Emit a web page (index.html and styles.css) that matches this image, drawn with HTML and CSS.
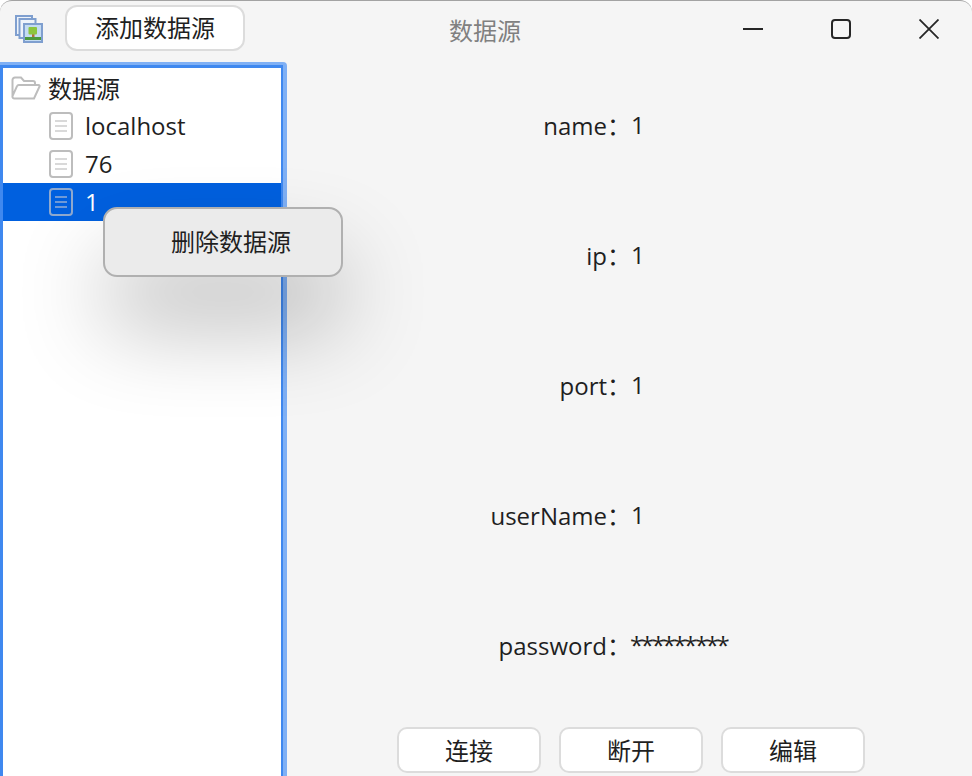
FILE: index.html
```html
<!DOCTYPE html>
<html>
<head>
    <title>数据源</title>
    <link rel="stylesheet" href="styles.css">
</head>
<body>

<div class="window">
    <div class="titlebar">
        <div class="title-left">
            <svg class="app-icon" width="28" height="28" viewBox="0 0 28 28">
                <rect x="1" y="1" width="16" height="19" fill="#eef3fa" stroke="#7f9fcf" stroke-width="2"/>
                <rect x="4.500" y="4" width="16" height="19" fill="#eef3fa" stroke="#7f9fcf" stroke-width="2"/>
                <rect x="9" y="9" width="18" height="18" fill="#c4dcf2" stroke="#7f9fcf" stroke-width="2"/>
                <rect x="10" y="22" width="16" height="3" fill="#4c9a3c"/>
                <rect x="17" y="19" width="2.500" height="3" fill="#b0703a"/>
                <rect x="13.500" y="12" width="8.500" height="7.500" rx="1" fill="#8cc63f"/>
            </svg>
            <button class="btn add-btn">添加数据源</button>
        </div>
        <div class="title-text">数据源</div>
        <div class="win-controls">
            <svg class="ctl-min" width="20" height="20" viewBox="0 0 20 20">
                <path d="M0 10H20" stroke="#262626" stroke-width="2"/>
            </svg>
            <svg class="ctl-max" width="20" height="20" viewBox="0 0 20 20">
                <rect x="1" y="1" width="18" height="18" rx="3" fill="none" stroke="#262626" stroke-width="2"/>
            </svg>
            <svg class="ctl-close" width="20" height="20" viewBox="0 0 20 20">
                <path d="M0.500 0.500L19.500 19.500M19.500 0.500L0.500 19.500" stroke="#262626" stroke-width="1.800"/>
            </svg>
        </div>
    </div>

    <div class="main">
        <div class="tree-outer">
            <div class="tree">
                <div class="tree-row">
                    <svg class="folder-icon" width="30" height="24" viewBox="0 0 30 24">
                        <path d="M1.500 20V4a2.500 2.500 0 0 1 2.500-2.500h6l3 3.500h9a2 2 0 0 1 2 2v1.500M5 22.500h18l5.500-12a1 1 0 0 0-1-1.500H8a2 2 0 0 0-2 1.200L1.500 20a2 2 0 0 0 2 2.500z" fill="none" stroke="#bdbdbd" stroke-width="2"/>
                    </svg>
                    <span class="tree-label">数据源</span>
                </div>
                <div class="tree-row child">
                    <svg class="file-icon" width="24" height="28" viewBox="0 0 24 28">
                        <rect x="1" y="1" width="22" height="26" rx="3" fill="none" stroke="#bdbdbd" stroke-width="2"/>
                        <path d="M6 9H18M6 14H18M6 19H18" stroke="#d9d9d9" stroke-width="2"/>
                    </svg>
                    <span class="tree-label">localhost</span>
                </div>
                <div class="tree-row child">
                    <svg class="file-icon" width="24" height="28" viewBox="0 0 24 28">
                        <rect x="1" y="1" width="22" height="26" rx="3" fill="none" stroke="#bdbdbd" stroke-width="2"/>
                        <path d="M6 9H18M6 14H18M6 19H18" stroke="#d9d9d9" stroke-width="2"/>
                    </svg>
                    <span class="tree-label">76</span>
                </div>
                <div class="tree-row child selected">
                    <svg class="file-icon" width="24" height="28" viewBox="0 0 24 28">
                        <rect x="1" y="1" width="22" height="26" rx="3" fill="none" stroke="#8fa9cf" stroke-width="2"/>
                        <path d="M6 9H18M6 14H18M6 19H18" stroke="#6f9ad8" stroke-width="2"/>
                    </svg>
                    <span class="tree-label">1</span>
                </div>
            </div>
        </div>

        <div class="detail">
            <div class="form-grid">
                <div class="field-label">name：</div><div>1</div>
                <div class="field-label">ip：</div><div>1</div>
                <div class="field-label">port：</div><div>1</div>
                <div class="field-label">userName：</div><div>1</div>
                <div class="field-label">password：</div><div class="masked">*********</div>
            </div>
            <div class="actions">
                <button class="btn action-btn">连接</button>
                <button class="btn action-btn">断开</button>
                <button class="btn action-btn">编辑</button>
            </div>
        </div>
    </div>

    <div class="context-menu">删除数据源</div>
</div>

</body>
</html>
```

FILE: styles.css
```css
body {
    margin: 0;
    background: #ffffff;
    font-family: "Open Sans", "Noto Sans CJK SC", sans-serif;
    font-size: 24px;
    color: #1f1f1f;
}
.window {
    position: relative;
    height: 775px;
    background: #f5f5f5;
    border-top: 1px solid #a3a3a3;
    border-radius: 12px 12px 0 0;
    overflow: hidden;
}
.titlebar {
    display: grid;
    grid-template-columns: 1fr auto 1fr;
    align-items: center;
    height: 61px;
}
.title-left {
    display: flex;
    align-items: center;
    padding-left: 15px;
    gap: 22px;
    margin-bottom: 8px;
}
.app-icon {
    margin-top: 2px;
}
.title-text {
    color: #808080;
    margin-bottom: 4px;
    margin-right: 2px;
}
.win-controls {
    display: flex;
    align-items: center;
    justify-content: flex-end;
    padding-right: 33px;
    margin-bottom: 5px;
}
.ctl-min {
    margin-right: 68px;
}
.ctl-max {
    margin-right: 68px;
}
.btn {
    font-family: inherit;
    font-size: 24px;
    color: #1f1f1f;
    background: #ffffff;
    border: 2px solid #dcdcdc;
    border-radius: 10px;
    padding: 0 0 2px;
    box-sizing: border-box;
}
.add-btn {
    width: 180px;
    height: 46px;
    border-radius: 12px;
}
.main {
    display: flex;
    height: 714px;
}
.tree-outer {
    width: 287px;
    flex-shrink: 0;
    box-sizing: border-box;
    border-top: 3px solid #7fb0f5;
    border-right: 4px solid #7fb0f5;
    border-top-right-radius: 4px;
}
.tree {
    height: 100%;
    box-sizing: border-box;
    background: #ffffff;
    border: 3px solid #3f88ef;
    border-bottom: none;
    border-right-width: 2px;
    padding-top: 1px;
}
.tree-row {
    display: flex;
    align-items: center;
    height: 38px;
    gap: 7px;
    padding-left: 8px;
}
.tree-row.child {
    padding-left: 46px;
    gap: 12px;
}
.tree-row.selected {
    background: #0060df;
    color: #ffffff;
}
.tree-label {
    padding-bottom: 2px;
}
.detail {
    flex: 1;
}
.form-grid {
    display: grid;
    grid-template-columns: 344px 1fr;
    grid-auto-rows: 40px;
    row-gap: 90px;
    align-items: center;
    padding-top: 42px;
}
.field-label {
    text-align: right;
}
.masked {
    letter-spacing: -2.400px;
    margin-left: -1px;
}
.actions {
    display: flex;
    gap: 18px;
    padding-left: 110px;
    margin-top: 63px;
}
.action-btn {
    width: 144px;
    height: 46px;
}
.context-menu {
    position: absolute;
    left: 103px;
    top: 206px;
    width: 240px;
    height: 70px;
    box-sizing: border-box;
    display: flex;
    align-items: center;
    justify-content: center;
    padding: 0 0 4px 16px;
    background: #ebebeb;
    border: 2px solid #b0b0b0;
    border-radius: 14px;
    box-shadow: 0 50px 90px -4px rgba(0,0,0,0.3);
}
```
